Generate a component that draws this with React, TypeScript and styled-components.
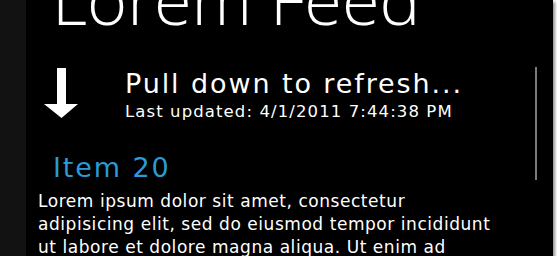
import React from "react";
import styled, { createGlobalStyle } from "styled-components";

const Global = createGlobalStyle`
  html, body { margin: 0; padding: 0; background: #fff; }
  body { font-family: "DejaVu Sans", "Open Sans", sans-serif; }
`;

const Frame = styled.div`
  width: 553px;
  height: 256px;
  display: flex;
  overflow: hidden;
  background: #000;
  box-shadow: 2px 2px 3px rgba(0, 0, 0, 0.45);
`;

const Strip = styled.div`
  width: 26px;
  flex: 0 0 auto;
  background: #111211;
`;

const Screen = styled.div`
  position: relative;
  flex: 1;
  color: #fff;
`;

const Title = styled.h1`
  margin: -32px 0 0 26px;
  font-family: "Open Sans", sans-serif;
  font-size: 68.5px;
  font-weight: 300;
  line-height: 62px;
  white-space: nowrap;
`;

const RefreshRow = styled.div`
  display: flex;
  align-items: flex-start;
  margin-top: 35px;
  padding-left: 18px;
`;

const Arrow = styled.svg`
  width: 34px;
  height: 50px;
  flex: 0 0 auto;
  margin-top: 3px;
`;

const RefreshText = styled.div`
  margin-left: 47px;
  display: flex;
  flex-direction: column;
`;

const Pull = styled.div`
  margin-top: 4px;
  font-size: 27px;
  line-height: 30px;
  letter-spacing: 1.9px;
  white-space: nowrap;
`;

const Updated = styled.div`
  margin-top: 4px;
  font-size: 16.5px;
  line-height: 18px;
  letter-spacing: 1.1px;
  white-space: nowrap;
`;

const Item = styled.section`
  padding: 32px 0 0 12px;
`;

const ItemTitle = styled.h2`
  margin: 0 0 0 15px;
  font-size: 27px;
  font-weight: 400;
  line-height: 30px;
  letter-spacing: 1.9px;
  color: #2a9bd6;
`;

const Body = styled.p`
  margin: 7px 0 0;
  font-size: 17px;
  line-height: 23px;
  letter-spacing: 0.55px;
  white-space: nowrap;
`;

const ScrollThumb = styled.div`
  position: absolute;
  left: 509px;
  top: 67px;
  width: 2px;
  height: 113px;
  background: #7a7a7a;
`;

export default function App() {
  return (
    <>
      <Global />
      <Frame>
        <Strip />
        <Screen>
          <Title>Lorem Feed</Title>
          <RefreshRow>
            <Arrow viewBox="0 0 34 50">
              <path d="M13 0 H22 V36 H34 L17.5 50 L0 36 H13 Z" fill="#fff" />
            </Arrow>
            <RefreshText>
              <Pull>Pull down to refresh...</Pull>
              <Updated>Last updated: 4/1/2011 7:44:38 PM</Updated>
            </RefreshText>
          </RefreshRow>
          <Item>
            <ItemTitle>Item 20</ItemTitle>
            <Body>
              Lorem ipsum dolor sit amet, consectetur
              <br />
              adipisicing elit, sed do eiusmod tempor incididunt
              <br />
              ut labore et dolore magna aliqua. Ut enim ad
            </Body>
          </Item>
          <ScrollThumb />
        </Screen>
      </Frame>
    </>
  );
}
